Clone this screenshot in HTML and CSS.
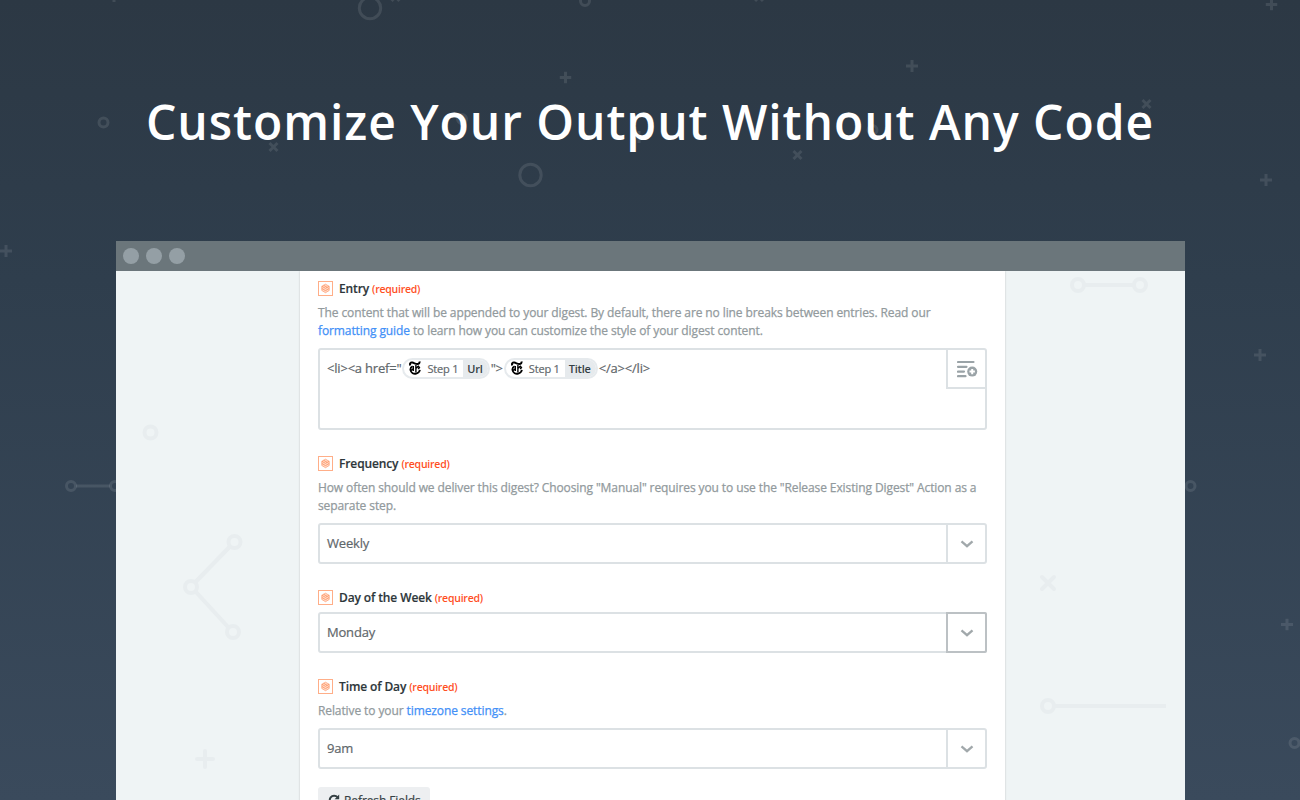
FILE: index.html
```html
<!DOCTYPE html>
<html lang="en">

<head>
    <meta charset="UTF-8">
    <meta name="viewport" content="width=device-width, initial-scale=1.0">
    <title>Customize Your Output Without Any Code</title>
    <link rel="stylesheet" href="styles.css">
</head>

<body>
    <!-- Shared icons -->
    <svg class="sprite" width="0" height="0">
        <symbol id="plus" viewBox="-6 -6 12 12">
            <path d="M-6 0H6M0 -6V6" stroke="currentColor" stroke-width="3" />
        </symbol>
        <symbol id="cross" viewBox="-6 -6 12 12">
            <path d="M-4 -4L4 4M4 -4L-4 4" stroke="currentColor" stroke-width="3" />
        </symbol>
        <symbol id="digest" viewBox="0 0 15 15">
            <rect x="0.5" y="0.5" width="14" height="14" fill="none" stroke="#ffae88" />
            <path d="M7.5 3.2L11.2 5.3V9.5L7.5 11.7L3.8 9.5V5.3Z" fill="#ffdccb" stroke="#ff9a6c" stroke-width="0.7" />
            <path d="M3.9 5.3L7.5 7.4L11.1 5.3M3.9 7.5L7.5 9.6L11.1 7.5M5.6 4.3L9.3 6.4" fill="none" stroke="#ff8f5c" stroke-width="0.8" />
        </symbol>
        <symbol id="chevron" viewBox="0 0 14 8">
            <path d="M1.5 1.3L7 6.2L12.5 1.3" fill="none" stroke="#a1a8ab" stroke-width="2.3" />
        </symbol>
        <symbol id="times" viewBox="0 0 12 14">
            <g fill="none" stroke="#000">
                <path d="M1.5 4.4C0.3 2.8 1.4 1.3 3.3 1.6C5.2 1.9 6.5 3.1 8.4 3C9.9 2.9 10.7 2 10.5 0.5" stroke-width="2" />
                <path d="M3.6 5.2C1.8 6 1.2 7.5 1.5 9.2C2 12 4.700 13.2 7.2 12.6C9.3 12.1 10.6 10.7 10.9 8.900" stroke-width="1.8" />
                <path d="M4.300 5V10M6.900 4V11.500" stroke-width="1.400" />
                <path d="M1.900 9.400L4.500 8M6.900 7.200L9.300 5.300L10.400 6.600L9.200 8" stroke-width="1.500" />
            </g>
        </symbol>
    </svg>

    <!-- Background pattern -->
    <svg class="pattern" width="1300" height="800" fill="none" stroke="currentColor">
        <g stroke-width="3">
            <circle cx="370" cy="8" r="10.7" />
            <circle cx="530.5" cy="175" r="10.7" />
            <circle cx="585" cy="1" r="4.5" />
            <circle cx="103.5" cy="122.5" r="4.5" />
            <circle cx="462" cy="119" r="4.5" />
            <circle cx="872.5" cy="130" r="4.5" />
            <circle cx="71" cy="486" r="4.5" />
            <circle cx="115" cy="486" r="4.5" />
            <circle cx="1190.5" cy="486" r="4.5" />
            <circle cx="1294.5" cy="743" r="4.5" />
            <path d="M76 486H110" />
        </g>
        <use href="#plus" x="559.5" y="71.5" width="12" height="12" />
        <use href="#plus" x="906" y="60" width="12" height="12" />
        <use href="#plus" x="1265.5" y="-1.5" width="12" height="12" />
        <use href="#plus" x="1260" y="174" width="12" height="12" />
        <use href="#plus" x="0" y="245" width="12" height="12" />
        <use href="#plus" x="1254" y="349" width="12" height="12" />
        <use href="#plus" x="1281" y="618.5" width="12" height="12" />
        <use href="#plus" x="633" y="131" width="12" height="12" />
        <use href="#plus" x="108" y="-10" width="12" height="12" />
        <use href="#cross" x="267.5" y="141" width="12" height="12" />
        <use href="#cross" x="791.5" y="149" width="12" height="12" />
        <use href="#cross" x="1140.5" y="98" width="12" height="12" />
        <use href="#cross" x="389.5" y="-9" width="12" height="12" />
        <use href="#cross" x="753" y="-9" width="12" height="12" />
    </svg>

    <h1 class="headline">Customize Your Output Without Any Code</h1>

    <div class="browser">
        <div class="browser-bar">
            <span class="dot"></span>
            <span class="dot"></span>
            <span class="dot"></span>
        </div>

        <div class="browser-body">
            <svg class="page-pattern" width="1069" height="529" fill="none" stroke="currentColor" stroke-width="4">
                <circle cx="34.5" cy="161.5" r="6" />
                <circle cx="118.5" cy="271" r="6" />
                <circle cx="75" cy="316" r="6" />
                <circle cx="117" cy="361" r="6" />
                <path d="M114 275.5L79.5 311M79.5 320.5L112.5 356.5" />
                <path d="M89 480V496M81 488H97" stroke-linecap="round" />
                <circle cx="962" cy="14" r="6" />
                <circle cx="1024" cy="14" r="6" />
                <path d="M968 14H1018" />
                <path d="M926 306L938 318M938 306L926 318" stroke-linecap="round" />
                <circle cx="932" cy="435" r="6" />
                <path d="M938 435H1050" />
            </svg>

            <div class="form">
                <!-- Entry -->
                <div class="field">
                    <div class="field-label">
                        <svg class="field-icon"><use href="#digest" /></svg>
                        <span class="field-name">Entry</span>
                        <span class="required">(required)</span>
                    </div>
                    <p class="help">The content that will be appended to your digest. By default, there are no line breaks between entries. Read our<br><a href="#">formatting guide</a> to learn how you can customize the style of your digest content.</p>
                    <div class="textarea">
                        <div class="textarea-content">
                            <span>&lt;li&gt;&lt;a href="</span>
                            <span class="pill"><svg class="pill-icon"><use href="#times" /></svg><span class="pill-step">Step 1</span><b class="pill-name">Url</b></span>
                            <span>"&gt;</span>
                            <span class="pill"><svg class="pill-icon"><use href="#times" /></svg><span class="pill-step">Step 1</span><b class="pill-name">Title</b></span>
                            <span>&lt;/a&gt;&lt;/li&gt;</span>
                        </div>
                        <button class="insert">
                            <svg width="21" height="18" viewBox="0 0 21 18" fill="none" stroke="#9aa3a7">
                                <path d="M1 2H16.5M1 6.8H9.5M1 11.6H7M1 16.2H8.5" stroke-width="2.2" stroke-linecap="round" />
                                <circle cx="15.2" cy="11.6" r="5" fill="#9aa3a7" stroke="none" />
                                <path d="M12.5 11.6H17.9M15.2 8.9V14.3" stroke="#fff" stroke-width="2" />
                            </svg>
                        </button>
                    </div>
                </div>

                <!-- Frequency -->
                <div class="field">
                    <div class="field-label">
                        <svg class="field-icon"><use href="#digest" /></svg>
                        <span class="field-name">Frequency</span>
                        <span class="required">(required)</span>
                    </div>
                    <p class="help">How often should we deliver this digest? Choosing "Manual" requires you to use the "Release Existing Digest" Action as a<br>separate step.</p>
                    <div class="select">
                        <span class="select-value">Weekly</span>
                        <button class="select-toggle"><svg class="chevron"><use href="#chevron" /></svg></button>
                    </div>
                </div>

                <!-- Day of the Week -->
                <div class="field">
                    <div class="field-label">
                        <svg class="field-icon"><use href="#digest" /></svg>
                        <span class="field-name">Day of the Week</span>
                        <span class="required">(required)</span>
                    </div>
                    <div class="select">
                        <span class="select-value">Monday</span>
                        <button class="select-toggle active"><svg class="chevron"><use href="#chevron" /></svg></button>
                    </div>
                </div>

                <!-- Time of Day -->
                <div class="field">
                    <div class="field-label">
                        <svg class="field-icon"><use href="#digest" /></svg>
                        <span class="field-name">Time of Day</span>
                        <span class="required">(required)</span>
                    </div>
                    <p class="help">Relative to your <a href="#">timezone settings</a>.</p>
                    <div class="select">
                        <span class="select-value">9am</span>
                        <button class="select-toggle"><svg class="chevron"><use href="#chevron" /></svg></button>
                    </div>
                </div>

                <button class="refresh">
                    <svg width="12" height="12" viewBox="0 0 12 12">
                        <path d="M9.5 3.2A4.4 4.4 0 1 0 10.4 7.2" fill="none" stroke="#354044" stroke-width="2" />
                        <path d="M11.2 0.6V5.2H6.6Z" fill="#354044" />
                    </svg>
                    Refresh Fields
                </button>
            </div>
        </div>
    </div>
</body>

</html>
```
FILE: styles.css
```css
/* General Styles */
* {
    margin: 0;
    padding: 0;
    box-sizing: border-box;
}

body {
    height: 800px;
    overflow: hidden;
    position: relative;
    font-family: "Open Sans", "Noto Sans", sans-serif;
    background: linear-gradient(#2c3844, #2f3e4d 35%, #3a4a5c);
}

button {
    font-family: inherit;
    border: none;
    background: none;
}

a {
    color: #4290f7;
    text-decoration: none;
}

.sprite {
    position: absolute;
}

/* Background pattern */
.pattern {
    position: absolute;
    top: 0;
    left: 0;
    color: rgba(255, 255, 255, 0.1);
}

/* Headline */
.headline {
    position: relative;
    height: 241px;
    padding-top: 89px;
    text-align: center;
    white-space: nowrap;
    font-size: 48px;
    font-weight: 600;
    line-height: 66px;
    letter-spacing: 0.94px;
    color: #fff;
}

/* Browser window */
.browser {
    position: relative;
    width: 1069px;
    height: 559px;
    margin-left: 116px;
}

.browser-bar {
    display: flex;
    align-items: center;
    gap: 7px;
    height: 30px;
    padding-left: 7px;
    background: #6b767b;
}

.dot {
    width: 16px;
    height: 16px;
    border-radius: 50%;
    background: #949fa5;
}

.browser-body {
    position: relative;
    height: 529px;
    padding-left: 184px;
    overflow: hidden;
    background: #eff4f5;
}

.page-pattern {
    position: absolute;
    top: 0;
    left: 0;
    color: #e8edef;
}

/* Form */
.form {
    position: relative;
    width: 705px;
    height: 560px;
    padding: 8px 18px 0;
    background: #fff;
    box-shadow: 0 0 2px rgba(0, 0, 0, 0.2);
}

.field {
    margin-bottom: 24px;
}

.field-label {
    display: flex;
    align-items: center;
    height: 18px;
    margin-bottom: 6px;
}

.field-icon {
    width: 15px;
    height: 15px;
    margin-right: 6px;
}

.field-name {
    margin-right: 3px;
    font-size: 12px;
    font-weight: 600;
    letter-spacing: -0.12px;
    color: #2d363a;
    -webkit-text-stroke: 0.15px;
}

.required {
    padding-top: 1px;
    font-size: 10.5px;
    font-weight: 600;
    letter-spacing: -0.24px;
    color: #ff4f1f;
}

.help {
    padding-top: 1px;
    margin-bottom: 8px;
    white-space: nowrap;
    font-size: 12px;
    line-height: 18px;
    letter-spacing: -0.1px;
    color: #929a9d;
    -webkit-text-stroke: 0.25px;
}

.textarea,
.select {
    display: flex;
    justify-content: space-between;
    width: 669px;
    border: 2px solid #dce1e4;
    border-radius: 3px;
    font-size: 13px;
    letter-spacing: -0.2px;
    color: #5f676b;
    -webkit-text-stroke: 0.2px;
}

.textarea {
    height: 82px;
}

.textarea-content {
    display: flex;
    align-items: center;
    height: 20px;
    margin-top: 8px;
    padding-left: 7px;
    white-space: nowrap;
}

.insert {
    display: flex;
    align-items: center;
    justify-content: center;
    width: 39px;
    height: 39px;
    padding-left: 2px;
    border-left: 2px solid #dce1e4;
    border-bottom: 2px solid #dce1e4;
}

/* Mapped value pill */
.pill {
    display: flex;
    align-items: center;
    height: 21px;
    margin: 0 1px;
    padding-left: 5px;
    border: 2px solid #e6eaed;
    border-radius: 11px;
    overflow: hidden;
    font-size: 11px;
    line-height: 17px;
}

.pill-icon {
    width: 12px;
    height: 14px;
    margin-right: 6px;
}

.pill-step {
    margin-right: 5px;
}

.pill-name {
    padding: 0 5px 0 4px;
    font-weight: 600;
    color: #354044;
    background: #e6eaed;
    -webkit-text-stroke: 0;
}

/* Select */
.select {
    height: 41px;
}

.select-value {
    padding-left: 7px;
    line-height: 37px;
}

.select-toggle {
    display: flex;
    align-items: center;
    justify-content: center;
    width: 39px;
    border-left: 2px solid #dce1e4;
}

.select-toggle.active {
    width: 41px;
    margin: -2px;
    border: 2px solid #bcc1c4;
    border-radius: 0 2px 2px 0;
}

.chevron {
    width: 14px;
    height: 8px;
}

.refresh {
    display: flex;
    align-items: center;
    gap: 4px;
    width: 112px;
    height: 26px;
    margin-top: -6px;
    padding-left: 10px;
    border-radius: 3px;
    font-size: 12px;
    letter-spacing: -0.1px;
    white-space: nowrap;
    color: #354044;
    background: #edeff1;
    -webkit-text-stroke: 0.2px;
}
```
